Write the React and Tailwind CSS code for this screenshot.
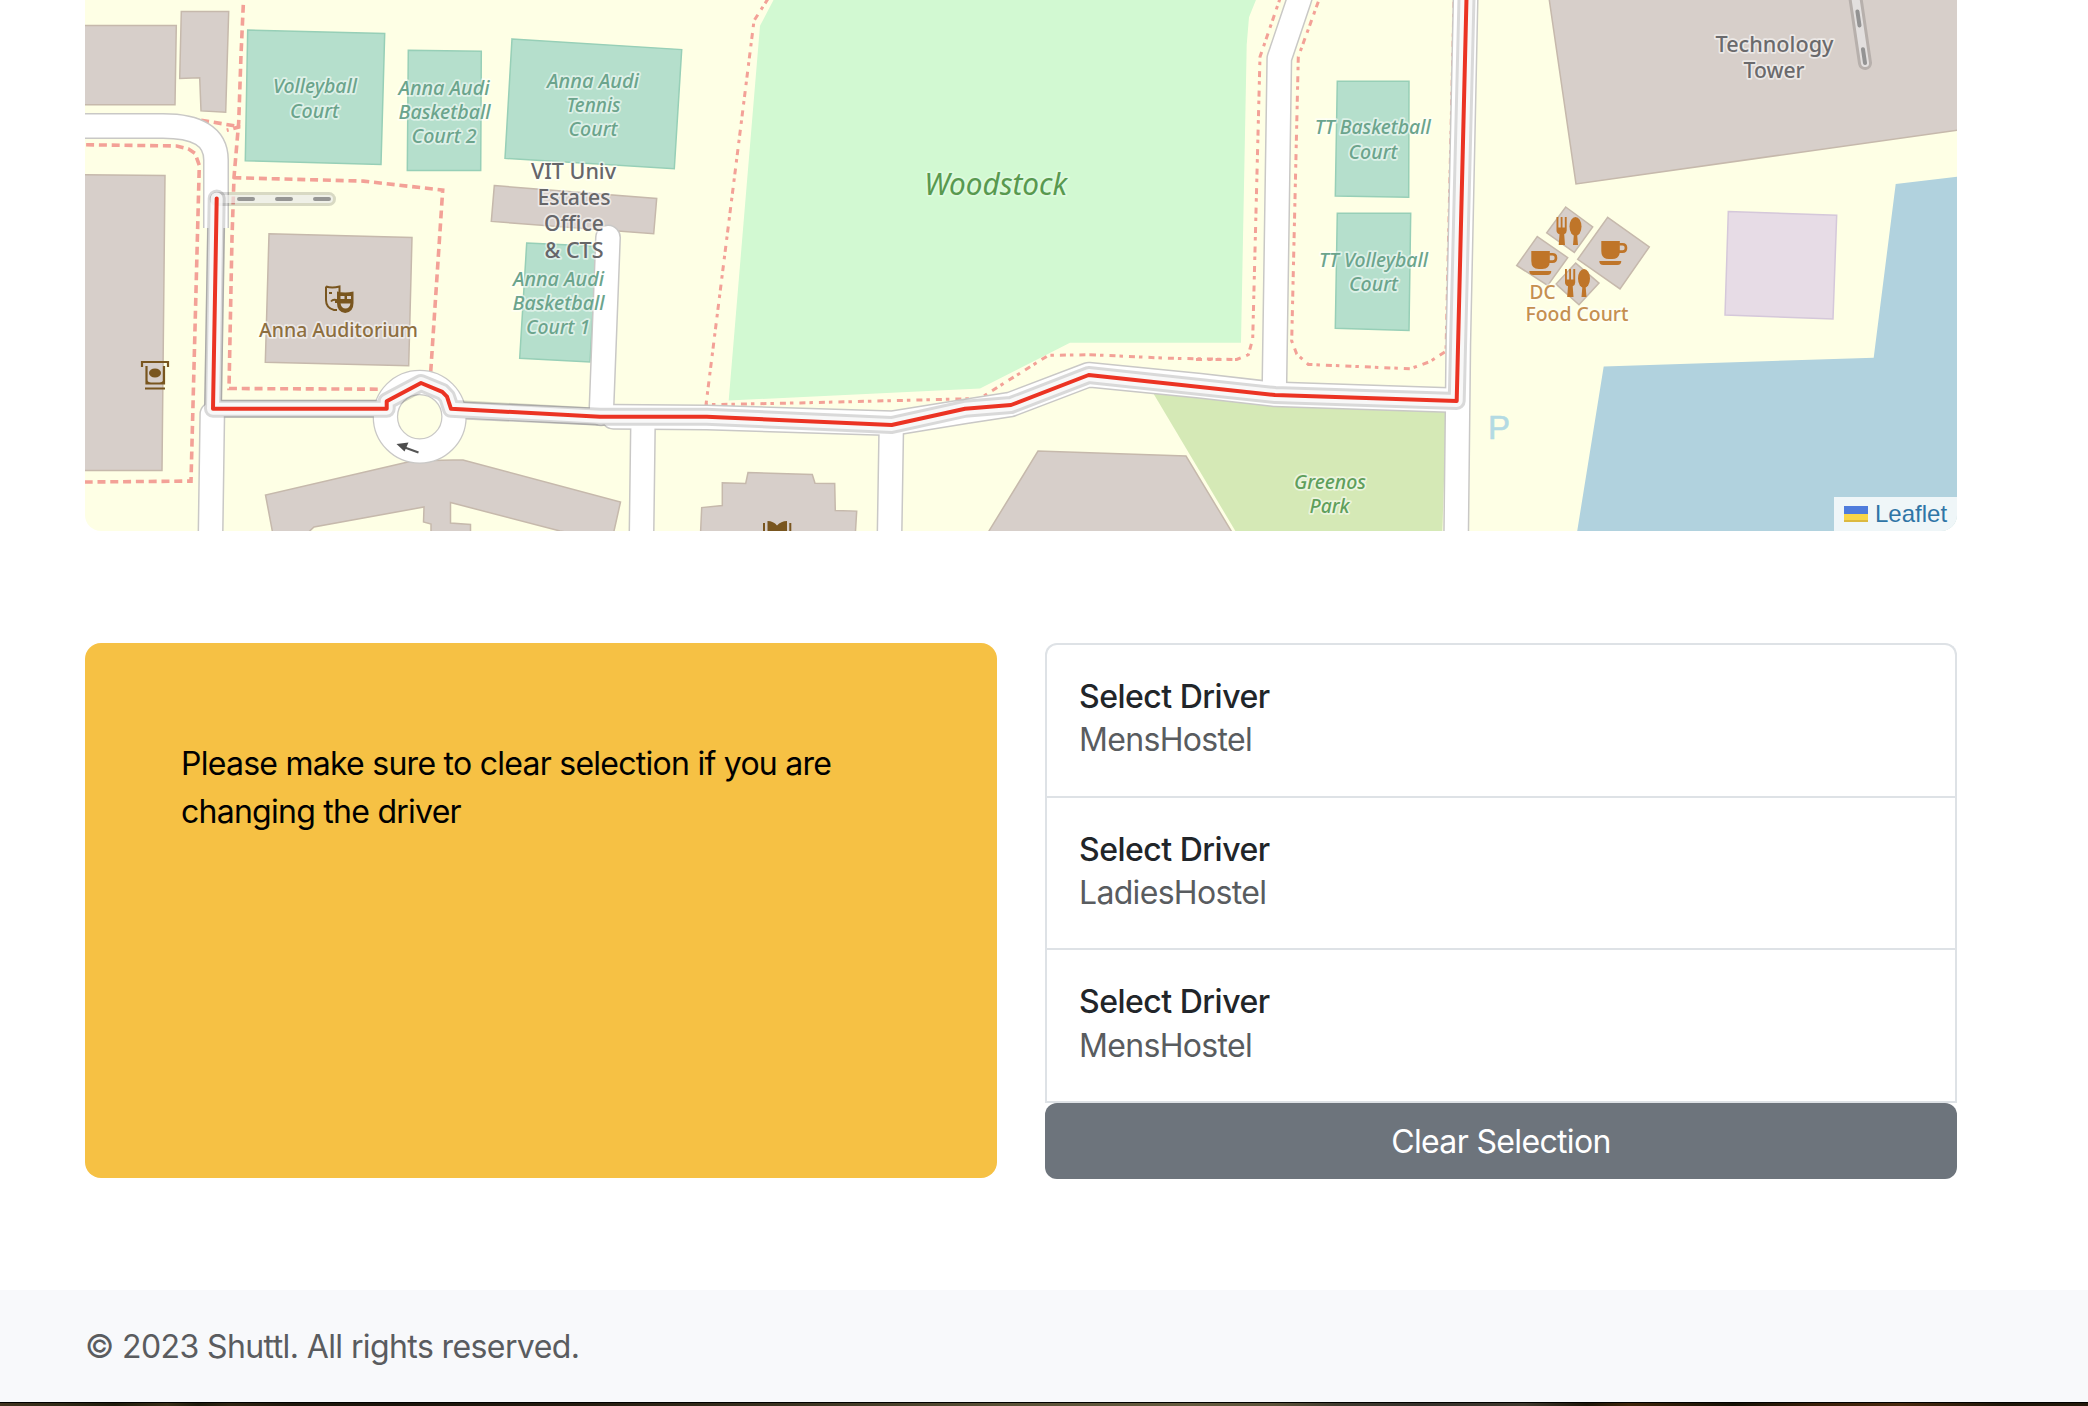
import React from "react";

const pt = (ox, s) =>
  s
    .trim()
    .split(/\s+/)
    .map((p) => {
      const [x, y] = p.split(",").map(Number);
      return (ox + x / 3).toFixed(1) + "," + (y / 2.9037).toFixed(1);
    })
    .join(" ");

const A = 80;
const B = 440;
const C = 800;
const D = 1200;
const E = 1500;

const buildings = [
  [A, "-20,74 289,74 285,304 -20,304"],
  [A, "304,33 446,33 437,326 363,322 359,226 299,228"],
  [A, "-20,507 255,510 246,1366 -20,1366"],
  [A, "567,679 996,690 986,1062 556,1052"],
  [B, "163,539 650,576 641,679 154,643"],
  [B, "779,1600 785,1474 847,1468 847,1402 917,1404 924,1372 1117,1378 1125,1403 1184,1404 1186,1482 1250,1484 1243,1600"],
  [C, "530,1600 714,1310 1158,1324 1330,1600"],
  [E, "145,-20 228,534 1400,374 1400,-20"],
  [E, "197,601 278,659 223,733 140,676"],
  [E, "112,687 203,748 143,829 50,771"],
  [E, "323,631 448,717 360,839 233,753"],
  [E, "227,764 297,822 237,885 168,825"],
];

const courts = [
  [A, "503,87 914,97 903,478 496,467"],
  [A, "985,146 1204,149 1202,495 982,495"],
  [B, "216,113 725,144 703,490 195,460"],
  [B, "260,706 470,715 450,1051 239,1040"],
  [D, "412,236 627,236 626,573 406,569"],
  [D, "412,619 632,619 627,960 406,953"],
];

const pathsEven = [
  [A, "490,14 483,160 476,355 462,515 456,690 447,1128 905,1130"],
  [A, "-20,334 230,338 350,347 480,368 440,378"],
  [A, "-20,420 290,424 325,432 345,445 358,480 333,1397 -20,1400"],
  [A, "460,516 850,526 1088,552 1052,1080"],
];

const pathsMixed = [
  [B, "985,-5 942,60 798,1175 1080,1170 1620,1157 1680,1120 1825,1032 1950,1030"],
  [C, "870,1030 1100,1040 1310,1044"],
  [D, "242,-10 180,165 158,985 145,1030 110,1044 -20,1044"],
  [D, "355,5 295,165 275,990 290,1028 325,1058 630,1071 690,1050 738,1020 762,0"],
];

const roads = [
  [C, "-560,1210 -280,1212 275,1229 495,1195 633,1174 866,1088 1200,1120 1425,1145 1970,1162"],
  [B, "504,690 484,1200"],
  [B, "609,1225 604,1600"],
  [C, "274,1240 268,1600"],
  [D, "310,-40 297,0 238,170 223,1140"],
  [D, "797,-20 775,1000 768,1600"],
  [A, "397,1203 391,1600"],
];

const routePoints = [
  pt(A, "410,576 399,1187 920,1187 920,1165 1023,1112 1087,1138 1101,1152 1113,1187"),
  pt(B, "480,1210 800,1210"),
  pt(C, "275,1234 495,1187 633,1176 866,1089"),
  pt(D, "225,1147 770,1164 800,-30"),
].join(" ");

const connectors = [pt(A, "747,578 410,578"), pt(E, "1095,183 1058,-60")];

function Label({ x, y, size = 20, fill, italic, halo = "#ffffff", haloOpacity = 0.55, length, children, weight = 500 }) {
  return (
    <text
      x={x}
      y={y}
      fontSize={size}
      fill={fill}
      fontStyle={italic ? "italic" : "normal"}
      fontWeight={weight}
      textAnchor="middle"
      textLength={length}
      lengthAdjust="spacingAndGlyphs"
      stroke={halo}
      strokeOpacity={haloOpacity}
      strokeWidth="3.5"
      strokeLinejoin="round"
      paintOrder="stroke"
    >
      {children}
    </text>
  );
}

const GREEN = "#6ba48c";
const labels = [
  [315, 93.2, 84, "Volleyball"],
  [314.5, 117.5, 49, "Court"],
  [444, 95, 91, "Anna Audi"],
  [444.5, 119, 92, "Basketball"],
  [444, 142.5, 65, "Court 2"],
  [593, 88, 92, "Anna Audi"],
  [593.5, 111.7, 54, "Tennis"],
  [593, 135.5, 49, "Court"],
  [558.5, 286, 91, "Anna Audi"],
  [558.5, 310, 92, "Basketball"],
  [558, 333.5, 64, "Court 1"],
  [1372.700, 134, 116, "TT Basketball"],
  [1373, 158.5, 49, "Court"],
  [1373.500, 266.7, 109, "TT Volleyball"],
  [1373.5, 291, 49, "Court"],
];

function Fork({ x, y }) {
  return (
    <g transform={`translate(${x} ${y})`} fill="#bf7529">
      <path d="M0 0h1.9v10.5h2.3V0h1.8v10.5h2.3V0h1.9v13.5q0 2.8-2.5 3.8l.8 10.7H2.2L3 17.300q-3-1-3-3.800z" />
      <ellipse cx="19" cy="9.500" rx="6" ry="9.500" />
      <path d="M17.500 16h3l1 12h-5z" />
    </g>
  );
}

function Cup({ x, y }) {
  return (
    <g transform={`translate(${x} ${y})`} fill="#bf7529">
      <path d="M2 0h18.500v10q0 8-7.500 8H9.500Q2 18 2 10z" />
      <path d="M20 3.200h3.200q3.500 0 3.500 3.700t-3.500 3.700H19" fill="none" stroke="#bf7529" strokeWidth="2.600" />
      <path d="M0 20h22q0 4-4 4H4q-4 0-4-4z" />
    </g>
  );
}

function MapDrawing() {
  return (
    <svg className="block h-[531px] w-[1872px]" viewBox="85 0 1872 531" fontFamily='"Noto Sans", "Open Sans", sans-serif'>
      <rect x="85" y="0" width="1872" height="531" fill="#feffe5" />
      <polygon points={pt(B, "1006,-10 960,75 866,1163 1620,1128 1890,995 2403,995 2420,130 2427,50 2452,-10")} fill="#d2f9d2" />
      <polygon points={pt(C, "1040,1110 1940,1150 1925,1600 1342,1600")} fill="#d5e9b6" />
      <polygon points={pt(E, "1400,510 1187,534 1121,1039 311,1064 222,1600 1400,1600")} fill="#b1d2de" />
      <polygon points={pt(E, "685,614 1010,625 999,926 675,915")} fill="#e7dce6" stroke="#d5c8da" strokeWidth="1.500" />
      <g fill="#b5dfcc" stroke="#97cfb7" strokeWidth="1.500">
        {courts.map(([o, p]) => <polygon key={p} points={pt(o, p)} />)}
      </g>
      <g fill="#d7cfca" stroke="#c6b9ac" strokeWidth="1.500">
        {buildings.map(([o, p]) => <polygon key={p} points={pt(o, p)} />)}
        <path d="M274 540L265.500 495L410 461.500Q438 459.500 463 460L620.500 502L612 540L560 531L450.500 502.500V523L470.500 524.500V540H431V524L423.500 522L424 507L314 527L300 540Z" />
      </g>
      <g fill="none" stroke="#f3a197" strokeWidth="3.600">
        {pathsEven.map(([o, p]) => <polyline key={p} points={pt(o, p)} strokeDasharray="8 4.800" />)}
        {pathsMixed.map(([o, p]) => <polyline key={p} points={pt(o, p)} strokeWidth="3" strokeDasharray="6 4 3.500 6" />)}
      </g>

      <g fill="none" strokeLinejoin="round">
        <g stroke="#c9c8c6" strokeWidth="26">
          {roads.map(([o, p]) => <polyline key={p} points={pt(o, p)} strokeLinecap="round" />)}
          <path d="M70 126H160Q216 125 216 160V228" />
          <circle cx="419.700" cy="416.700" r="34.300" strokeWidth="25.500" />
          <polyline points={pt(A, "408,660 399,1187 940,1187")} strokeWidth="18" />
          <polyline points={pt(B, "20,1190 480,1210")} strokeWidth="18" />
        </g>
        <g stroke="#ffffff" strokeWidth="23">
          {roads.map(([o, p]) => <polyline key={p} points={pt(o, p)} strokeLinecap="round" />)}
          <path d="M70 126H160Q216 125 216 160V228" />
          <circle cx="419.700" cy="416.700" r="34.300" />
          <polyline points={pt(A, "408,650 399,1187 940,1187")} strokeWidth="15" />
          <polyline points={pt(B, "20,1190 500,1210")} strokeWidth="15" />
        </g>
      </g>

      <path d="M418.500 452.500L402 446.500" stroke="#555555" strokeWidth="2.200" />
      <path d="M396.500 444L408.500 442.500L404.500 451.500Z" fill="#4d4d4d" />

      {labels.map(([x, y, w, t]) => (
        <Label key={t + x + y} x={x} y={y} length={w} fill={GREEN} italic>{t}</Label>
      ))}
      <Label x={995.700} y={195} size={30} length={143} fill="#58994f" italic haloOpacity={0.3} weight={400}>Woodstock</Label>
      <Label x={1330} y={489} length={72} fill="#5f9f5c" italic>Greenos</Label>
      <Label x={1329.500} y={513} length={40} fill="#5f9f5c" italic>Park</Label>
      <g>
        <Label x={573.500} y={178.500} size={22} length={85} fill="#666669">VIT Univ</Label>
        <Label x={574} y={205} size={22} length={73} fill="#666669">Estates</Label>
        <Label x={574} y={231} size={22} length={60} fill="#666669">Office</Label>
        <Label x={574} y={257.500} size={22} length={59} fill="#666669">&amp; CTS</Label>
        <Label x={1774.500} y={51.500} size={22} length={118} fill="#6a6a6c">Technology</Label>
        <Label x={1774} y={77.500} size={22} length={61} fill="#6a6a6c">Tower</Label>
      </g>
      <Label x={338.500} y={337} length={159} fill="#8d6f3f">Anna Auditorium</Label>
      <Label x={1542.500} y={299} length={26} fill="#c58f50">DC</Label>
      <Label x={1577} y={321} length={103} fill="#c58f50">Food Court</Label>
      <text x="1488" y="439" fontSize="33" fill="#b3dae3" stroke="#b3dae3" strokeWidth="0.600" fontFamily='"Liberation Sans", sans-serif'>P</text>

      <Fork x={1556.500} y={217} />
      <Fork x={1565} y={269} />
      <Cup x={1529.300} y={251} />
      <Cup x={1599.300} y={241} />

      {/* theatre masks */}
      <g fill="none" stroke="#79561f" strokeWidth="2">
        <path d="M326 286.500q6 2 13.500 0V292M326 286.500V300q0 8 8 10h3" />
        <path d="M329 293h3M331 301.500q2-2.500 5-1.500v3" />
      </g>
      <path d="M337 291.500q8 2 16.500 0V303q0 9-8.300 10Q337 312 337 303Z" fill="#79561f" />
      <path d="M340.500 296h4v3h-4zM347 296h4v3h-4zM340.500 303.500h10q-1 5-5 5t-5-5z" fill="#d7cfca" />

      {/* cash machine */}
      <g fill="none" stroke="#79561f" strokeWidth="2.200">
        <path d="M142 367V362H168V367" />
        <path d="M146.500 366V383.500H164V366M145 388.500H165" />
      </g>
      <ellipse cx="155" cy="373" rx="6" ry="4.500" fill="#79561f" />
      <path d="M146 378q1 4 5 5h-5zM164.500 378q-1 4-5 5h5z" fill="#79561f" />

      {/* library */}
      <path d="M767.500 521q6 0 9.500 4.500q4-4.500 10-4.500V535H767.500Z" fill="#79561f" />
      <path d="M764 523V535M790.300 523V535" stroke="#79561f" strokeWidth="2" />

      {/* connectors and shuttle route */}
      <g fill="none" strokeLinecap="round" strokeLinejoin="round">
        {connectors.map((c) => (
          <g key={c}>
            <polyline points={c} stroke="#000000" strokeOpacity="0.150" strokeWidth="14" />
            <polyline points={c} stroke="#ffffff" strokeOpacity="0.600" strokeWidth="8" />
            <polyline points={c} stroke="#808080" strokeOpacity="0.800" strokeWidth="4" strokeDasharray="14 24" />
          </g>
        ))}
        <polyline points={routePoints} stroke="#000000" strokeOpacity="0.150" strokeWidth="18" />
        <polyline points={routePoints} stroke="#ffffff" strokeOpacity="0.800" strokeWidth="12" />
        <polyline points={routePoints} stroke="#eb3323" strokeWidth="4" />
      </g>
    </svg>
  );
}

const drivers = ["MensHostel", "LadiesHostel", "MensHostel"];

export default function App() {
  return (
    <div className="flex h-[1406px] w-[2088px] flex-col overflow-hidden bg-white font-['Inter',sans-serif] text-[32px] leading-[48px]">
      <main className="h-[1290px] pr-[131px] pl-[85px]">
        <section className="relative h-[531px] overflow-hidden rounded-b-2xl">
          <MapDrawing />
          <div className="absolute right-0 bottom-0 flex h-[34px] w-[123px] items-center gap-[7px] bg-white/80 pl-2.5 font-['Liberation_Sans',sans-serif] text-2xl leading-none text-[#2f75a6]">
            <span className="flex h-4 w-6 flex-col">
              <span className="h-2 bg-[#4f7cdc]" />
              <span className="h-1.5 bg-[#f9d648]" />
              <span className="h-0.5 bg-[#dcb93f]" />
            </span>
            <span>Leaflet</span>
          </div>
        </section>

        <section className="mt-28 grid grid-cols-2 gap-12">
          <div className="h-[535px] rounded-2xl bg-[#f6c144] px-24 pt-[97px] text-black">
            <p className="tracking-[-0.74px] whitespace-nowrap">
              Please make sure to clear selection if you are
              <br />
              changing the driver
            </p>
          </div>
          <div>
            <ul className="rounded-t-xl border-2 border-b-0 border-[#dee2e6]">
              {drivers.map((name, i) => (
                <li key={i} className="h-[152.600px] border-b-2 border-[#dee2e6] px-8 pt-[33px]">
                  <h6 className="text-[32px] leading-[38.400px] font-medium tracking-[-0.5px] text-[#212529]">Select Driver</h6>
                  <p className="tracking-[-0.68px] text-[#595c5f]">{name}</p>
                </li>
              ))}
            </ul>
            <button className="block h-[76px] w-full rounded-xl bg-[#6d747c] pt-0.5 text-center tracking-[-0.65px] text-white">Clear Selection</button>
          </div>
        </section>
      </main>

      <footer className="h-28 bg-[#f8f9fb] px-[85px] pt-[33px] tracking-[-0.6px] text-[#5a5c5f]">© 2023 Shuttl. All rights reserved.</footer>
      <div className="h-px bg-black" />
      <div className="h-[3px] bg-[linear-gradient(90deg,#41341f_0%,#302a16_3%,#1f1b0b_5.500%,#3a2f17_8%,#1d1a0b_9.500%,#302512_11%,#1f170b_14%,#1b140a_19%,#251c0f_28%,#3b3320_38%,#5a5136_48%,#665c3f_57%,#5c5339_61%,#403b2e_64%,#35312a_68%,#40392d_73%,#1d1507_76%,#3f2509_78%,#151004_83%,#3a1f08_87%,#4a2a0e_91%,#1e1608_96%,#241a0b_100%)]" />
    </div>
  );
}
